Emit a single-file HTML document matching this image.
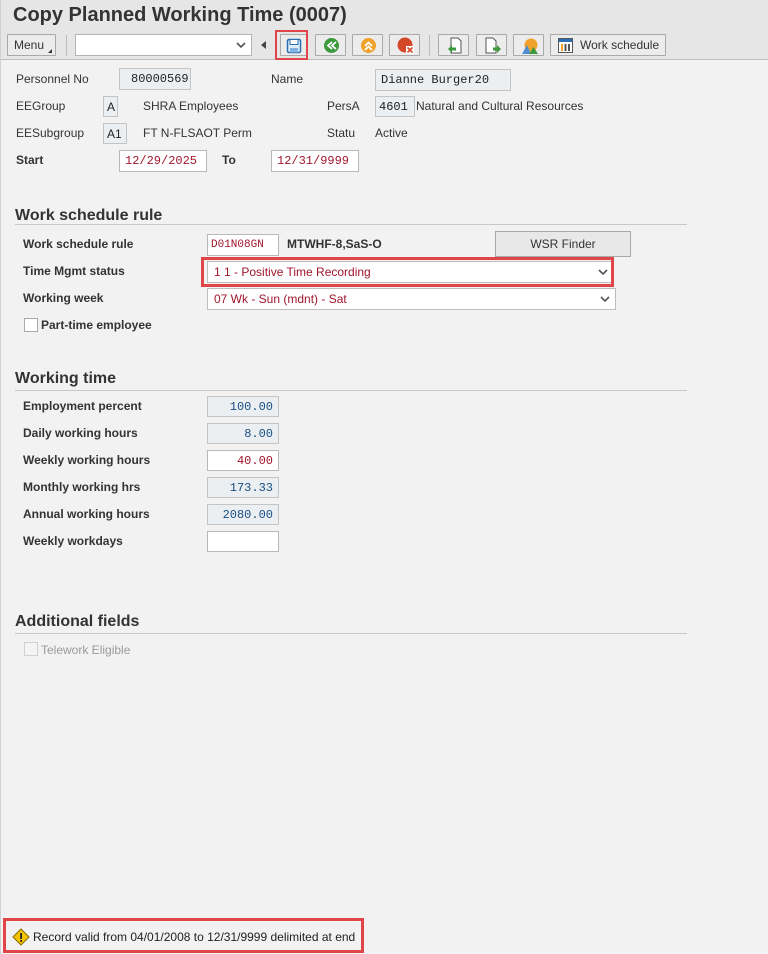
<!DOCTYPE html>
<html><head><meta charset="utf-8"><style>
*{margin:0;padding:0;box-sizing:border-box}
body{width:768px;height:954px;background:#f2f2f2;font-family:"Liberation Sans",Arial,sans-serif;font-size:12px;color:#333;position:relative;overflow:hidden}
.a{position:absolute}
.hdr{left:0;top:0;width:768px;height:60px;background:#e6e6e6;border-bottom:1px solid #bdbdbd}
.btn{position:absolute;top:34px;height:22px;background:#ececec;border:1px solid #a9a9a9;border-radius:1px}
.lbl{position:absolute;line-height:14px;white-space:nowrap}
.b{font-weight:bold}
.box{position:absolute;height:21px;border:1px solid #c4c4c4;background:#eceff1;font-family:"Liberation Mono",monospace;font-size:12px;line-height:20px;padding:0 5px;color:#222}
.in{background:#fff;border-color:#b8b8b8}
.red{color:#a0152b}
.num{text-align:right;color:#174f86;font-family:"Liberation Mono",monospace}
.sec{position:absolute;left:15px;font-size:16px;font-weight:bold;color:#333}
.line{position:absolute;left:15px;width:672px;height:1px;background:#c8c8c8}
.sel{position:absolute;height:22px;background:#fff;border:1px solid #bdbdbd;color:#a0152b;padding-left:6px;line-height:20px}
</style></head><body>
<div class="a hdr"></div>
<div class="a" style="left:13px;top:4px;font-size:20px;font-weight:bold;color:#333">Copy Planned Working Time (0007)</div>
<div class="btn" style="left:7px;width:49px"><span style="position:absolute;left:6px;top:3px">Menu</span><span style="position:absolute;right:3px;bottom:2px;width:0;height:0;border-left:4px solid transparent;border-bottom:4px solid #333"></span></div>
<div class="a" style="left:66px;top:35px;width:1px;height:21px;background:#bbb"></div>
<div class="a" style="left:75px;top:34px;width:177px;height:22px;background:#fff;border:1px solid #b4b4b4"><svg class="a" style="right:5px;top:7px" width="10" height="7"><path d="M1 1 L5 5 L9 1" stroke="#555" stroke-width="1.6" fill="none"/></svg></div>
<div class="a" style="left:261px;top:41px;width:0;height:0;border-top:4px solid transparent;border-bottom:4px solid transparent;border-right:5px solid #444"></div>
<div class="btn" style="left:280px;width:27px"><svg class="a" style="left:5px;top:3px" width="16" height="16"><rect x="1.5" y="1.5" width="13" height="13" rx="1.5" fill="#dfeefb" stroke="#2a6fb3" stroke-width="1.5"/><rect x="4" y="1.5" width="8" height="5" fill="#fff" stroke="#2a6fb3"/><rect x="4" y="10" width="8" height="4.5" fill="#7fb2e0"/></svg></div>
<div class="a" style="left:275px;top:30px;width:33px;height:30px;border:2px solid #e0454a"></div>
<div class="btn" style="left:315px;width:31px"><svg class="a" style="left:7px;top:2px" width="17" height="17"><circle cx="8.5" cy="8.5" r="7.5" fill="#3c9a3c"/><path d="M9 5 L5 8.5 L9 12 M13 5 L9 8.5 L13 12" stroke="#fff" stroke-width="1.8" fill="none"/></svg></div>
<div class="btn" style="left:352px;width:31px"><svg class="a" style="left:7px;top:2px" width="17" height="17"><circle cx="8.5" cy="8.5" r="7.5" fill="#f0a22a"/><path d="M5 9 L8.5 5.5 L12 9 M5 13 L8.5 9.5 L12 13" stroke="#fff" stroke-width="1.8" fill="none"/></svg></div>
<div class="btn" style="left:389px;width:31px"><svg class="a" style="left:7px;top:2px" width="18" height="18"><circle cx="8" cy="8" r="7.5" fill="#d4482a"/><rect x="9" y="9" width="8" height="8" fill="#fff"/><path d="M10.5 10.5 L15.5 15.5 M15.5 10.5 L10.5 15.5" stroke="#d4482a" stroke-width="1.6"/></svg></div>
<div class="a" style="left:429px;top:35px;width:1px;height:21px;background:#bbb"></div>
<div class="btn" style="left:438px;width:31px"><svg class="a" style="left:8px;top:2px" width="16" height="18"><path d="M4 1 H11 L14 4 V16 H4 Z" fill="#fff" stroke="#555"/><path d="M1 12 L5 8 V10.5 H9 V13.5 H5 V16 Z" fill="#3c9a3c"/></svg></div>
<div class="btn" style="left:476px;width:31px"><svg class="a" style="left:8px;top:2px" width="17" height="18"><path d="M1 1 H8 L11 4 V16 H1 Z" fill="#fff" stroke="#555"/><path d="M16 12 L12 8 V10.5 H8 V13.5 H12 V16 Z" fill="#3c9a3c"/></svg></div>
<div class="btn" style="left:513px;width:31px"><svg class="a" style="left:7px;top:2px" width="18" height="18"><circle cx="10" cy="8" r="6.5" fill="#f0a22a"/><path d="M1 17 L6 8 L10 17 Z" fill="#4f8fd0"/><path d="M8 17 L12.5 10 L17 17 Z" fill="#3c9a3c"/></svg></div>
<div class="btn" style="left:550px;width:116px"><svg class="a" style="left:7px;top:3px" width="15" height="15"><rect x="0.5" y="0.5" width="14" height="14" fill="#fff" stroke="#555"/><rect x="1" y="1" width="13" height="3" fill="#2a6fb3"/><rect x="3" y="6" width="2" height="7" fill="#f0a22a"/><rect x="6.5" y="6" width="2" height="7" fill="#555"/><rect x="10" y="6" width="2" height="7" fill="#555"/></svg><span style="position:absolute;left:29px;top:3px">Work schedule</span></div>

<div class="lbl" style="left:16px;top:72px">Personnel No</div>
<div class="box" style="left:119px;top:68px;width:72px;height:22px;padding-left:11px">80000569</div>
<div class="lbl" style="left:271px;top:72px">Name</div>
<div class="box" style="left:375px;top:69px;width:136px;height:22px">Dianne Burger20</div>
<div class="lbl" style="left:16px;top:99px">EEGroup</div>
<div class="box" style="left:103px;top:96px;width:15px;padding:0 3px;font-family:'Liberation Sans'">A</div>
<div class="lbl" style="left:143px;top:99px">SHRA Employees</div>
<div class="lbl" style="left:327px;top:99px">PersA</div>
<div class="box" style="left:375px;top:96px;width:40px;padding-left:3px">4601</div>
<div class="lbl" style="left:416px;top:99px">Natural and Cultural Resources</div>
<div class="lbl" style="left:16px;top:126px">EESubgroup</div>
<div class="box" style="left:103px;top:123px;width:24px;padding:0 3px;font-family:'Liberation Sans'">A1</div>
<div class="lbl" style="left:143px;top:126px">FT N-FLSAOT Perm</div>
<div class="lbl" style="left:327px;top:126px">Statu</div>
<div class="lbl" style="left:375px;top:126px">Active</div>
<div class="lbl b" style="left:16px;top:153px">Start</div>
<div class="box in red" style="left:119px;top:150px;width:88px;height:22px">12/29/2025</div>
<div class="lbl b" style="left:222px;top:153px">To</div>
<div class="box in red" style="left:271px;top:150px;width:88px;height:22px">12/31/9999</div>

<div class="sec" style="top:207px">Work schedule rule</div>
<div class="line" style="top:224px"></div>
<div class="lbl b" style="left:23px;top:237px">Work schedule rule</div>
<div class="box in red" style="left:207px;top:234px;width:72px;height:22px;padding-left:3px;font-size:11px">D01N08GN</div>
<div class="lbl b" style="left:287px;top:237px">MTWHF-8,SaS-O</div>
<div class="a" style="left:495px;top:231px;width:136px;height:26px;background:#e8e8e8;border:1px solid #a9a9a9;text-align:center;line-height:24px">WSR Finder</div>
<div class="lbl b" style="left:23px;top:264px">Time Mgmt status</div>
<div class="sel" style="left:207px;top:261px;width:406px">1 1 - Positive Time Recording<svg class="a" style="right:4px;top:7px" width="10" height="7"><path d="M1 1 L5 5 L9 1" stroke="#555" stroke-width="1.6" fill="none"/></svg></div>
<div class="a" style="left:201px;top:257px;width:413px;height:30px;border:3px solid #e0454a"></div>
<div class="lbl b" style="left:23px;top:291px">Working week</div>
<div class="sel" style="left:207px;top:288px;width:409px">07 Wk - Sun (mdnt) - Sat<svg class="a" style="right:5px;top:7px" width="10" height="7"><path d="M1 1 L5 5 L9 1" stroke="#555" stroke-width="1.6" fill="none"/></svg></div>
<div class="a" style="left:24px;top:318px;width:14px;height:14px;background:#fff;border:1px solid #aaa"></div>
<div class="lbl b" style="left:41px;top:318px">Part-time employee</div>

<div class="sec" style="top:370px">Working time</div>
<div class="line" style="top:390px"></div>
<div class="lbl b" style="left:23px;top:399px">Employment percent</div>
<div class="box num" style="left:207px;top:396px;width:72px">100.00</div>
<div class="lbl b" style="left:23px;top:426px">Daily working hours</div>
<div class="box num" style="left:207px;top:423px;width:72px">8.00</div>
<div class="lbl b" style="left:23px;top:453px">Weekly working hours</div>
<div class="box num in red" style="left:207px;top:450px;width:72px;color:#a0152b">40.00</div>
<div class="lbl b" style="left:23px;top:480px">Monthly working hrs</div>
<div class="box num" style="left:207px;top:477px;width:72px">173.33</div>
<div class="lbl b" style="left:23px;top:507px">Annual working hours</div>
<div class="box num" style="left:207px;top:504px;width:72px">2080.00</div>
<div class="lbl b" style="left:23px;top:534px">Weekly workdays</div>
<div class="box in" style="left:207px;top:531px;width:72px"></div>

<div class="sec" style="top:613px">Additional fields</div>
<div class="line" style="top:633px"></div>
<div class="a" style="left:24px;top:642px;width:14px;height:14px;background:#f4f4f4;border:1px solid #d0d0d0"></div>
<div class="lbl" style="left:41px;top:643px;color:#999">Telework Eligible</div>

<div class="a" style="left:0;top:0;width:1px;height:954px;background:#d0d0d0"></div>
<div class="a" style="left:3px;top:918px;width:361px;height:35px;border:3px solid #e0454a;background:#f2f2f2"></div>
<svg class="a" style="left:12px;top:928px" width="18" height="18"><path d="M9 1 L17 9 L9 17 L1 9 Z" fill="#f5c400" stroke="#8a6a00"/><rect x="8.2" y="5" width="1.8" height="6" fill="#222"/><rect x="8.2" y="12" width="1.8" height="1.8" fill="#222"/></svg>
<div class="lbl" style="left:33px;top:930px;color:#222">Record valid from 04/01/2008 to 12/31/9999 delimited at end</div>
</body></html>
